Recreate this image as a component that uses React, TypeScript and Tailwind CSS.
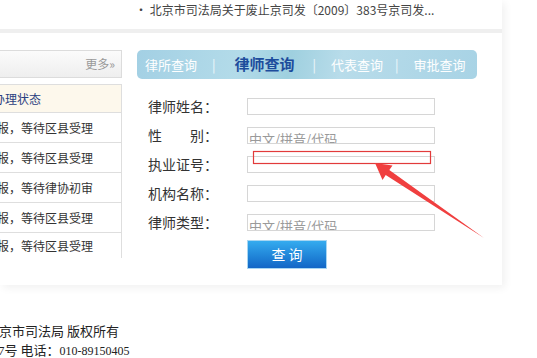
import React from 'react';

const rows = [
  '已上报，等待区县受理',
  '已上报，等待区县受理',
  '已上报，等待律协初审',
  '已上报，等待区县受理',
  '已上报，等待区县受理',
];

const fields = [
  { label: '律师姓名：', hint: '' },
  { label: '性　　别：', hint: '中文/拼音/代码' },
  { label: '执业证号：', hint: '' },
  { label: '机构名称：', hint: '' },
  { label: '律师类型：', hint: '中文/拼音/代码' },
];

export default function App() {
  return (
    <div className="relative w-[537px] h-[358px] overflow-hidden bg-white font-['Noto_Sans_CJK_SC',sans-serif] text-[#333]">
      <div className="w-[502px] bg-[#efefef] shadow-[3px_3px_8px_rgba(0,0,0,0.06)]">
        {/* 顶部公告 */}
        <div className="h-[29px] bg-white pl-[135px] pt-[3px] text-[12px] leading-[14px] text-[#444] whitespace-nowrap">
          · 北京市司法局关于废止京司发〔2009〕383号京司发...
        </div>
        <div className="h-[4px]" />

        {/* 主面板 */}
        <div className="h-[252px] bg-white flex pt-[17px]">
          {/* 左侧列表 */}
          <div className="w-[122px] shrink-0">
            <div className="h-[28px] border border-l-0 border-[#dcdcdc] bg-gradient-to-b from-[#fbfbfb] to-[#eeeeee] flex items-center justify-end pr-[6px] text-[12px] text-[#999]">
              更多»
            </div>
            <div className="mt-[6px] w-[122px] border-t border-r border-[#dedede] overflow-hidden">
              <div className="h-[27px] bg-[#fdf8ec] flex items-center text-[12px] text-[#2b3f80] whitespace-nowrap">
                <span className="ml-[-7px]">办理状态</span>
              </div>
              {rows.map((r, i) => (
                <div
                  key={i}
                  className={`flex items-center text-[12px] text-[#333] whitespace-nowrap border-t border-[#dedede] ${i === rows.length - 1 ? 'h-[26px]' : 'h-[30px]'}`}
                >
                  <span className="ml-[-27px]">{r}</span>
                </div>
              ))}
            </div>
          </div>

          {/* 右侧查询 */}
          <div className="ml-[15px] w-[340px]">
            <div className="h-[29px] rounded-[5px] bg-[linear-gradient(100deg,#a3d0e4_0%,#b3dbe9_30%,#9fd0df_45%,#b8dcea_60%,#a8d3e5_100%)] flex items-center pl-[8px] text-[13px] text-white whitespace-nowrap">
              <span>律所查询</span>
              <span className="ml-[15px] text-white/80">|</span>
              <span className="ml-[19px] text-[15px] font-bold text-[#1d4c9c]">律师查询</span>
              <span className="ml-[18px] text-white/80">|</span>
              <span className="ml-[15px]">代表查询</span>
              <span className="ml-[12px] text-white/80">|</span>
              <span className="ml-[15px]">审批查询</span>
            </div>

            <div className="mt-[13px] pl-[11px]">
              {fields.map((f, i) => (
                <div key={i} className="h-[29px] flex items-center">
                  <div className="w-[99px] text-[14px] text-[#333] whitespace-pre">{f.label}</div>
                  <div className="w-[188px] h-[17px] border border-[#d6d6d6] bg-white overflow-hidden pl-[1px] pt-[3px] text-[13px] leading-[16px] text-[#9a9a9a] whitespace-nowrap">
                    {f.hint}
                  </div>
                </div>
              ))}
              <div className="ml-[99px] mt-[3px] w-[80px] h-[29px] border border-[#a8d6f2] bg-gradient-to-b from-[#35abef] to-[#1366c6] flex items-center justify-center text-[14px] text-white">
                查 询
              </div>
            </div>
          </div>
        </div>
      </div>

      {/* 页脚 */}
      <div className="mt-[36px] text-[13px] leading-[19px] text-[#222] whitespace-nowrap">
        <div className="ml-[-14px]">北京市司法局 版权所有</div>
        <div className="ml-[-2px]">
          <span className="font-['Liberation_Serif',serif]">7</span>号 电话：
          <span className="font-['Liberation_Serif',serif] text-[12px]">010-89150405</span>
        </div>
      </div>

      {/* 标注 */}
      <svg className="absolute left-0 top-0 pointer-events-none" width="537" height="358">
        <rect x="253.5" y="151.5" width="177" height="12" fill="none" stroke="#e23b3b" strokeWidth="1.2" />
        <polygon
          points="375,163 392.5,165.5 389.3,170 484,238 385.7,175 382.5,180"
          fill="#f03f3f"
        />
      </svg>
    </div>
  );
}
